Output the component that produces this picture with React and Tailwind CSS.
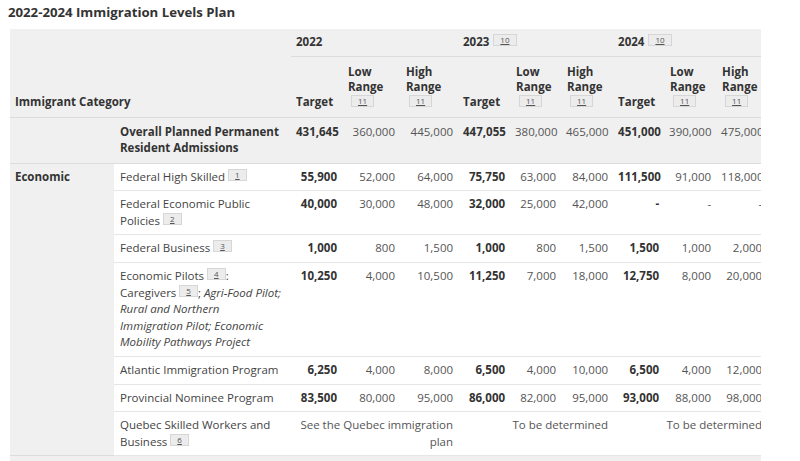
import React from "react";

const Fn = ({ n, className = "" }) => (
  <span
    className={
      "inline-block px-[6px] h-[12px] leading-[10px] text-[8px] font-normal not-italic border border-[#d6d6d6] bg-[#ececec] text-[#555] underline align-[3px] " +
      className
    }
  >
    {n}
  </span>
);

const rows = [
  {
    label: (
      <>
        Federal High Skilled <Fn n="1" />
      </>
    ),
    vals: ["55,900", "52,000", "64,000", "75,750", "63,000", "84,000", "111,500", "91,000", "118,000"],
  },
  {
    label: (
      <>
        Federal Economic Public
        <br />
        Policies <Fn n="2" />
      </>
    ),
    vals: ["40,000", "30,000", "48,000", "32,000", "25,000", "42,000", "-", "-", "-"],
  },
  {
    label: (
      <>
        Federal Business <Fn n="3" />
      </>
    ),
    vals: ["1,000", "800", "1,500", "1,000", "800", "1,500", "1,500", "1,000", "2,000"],
  },
  {
    label: (
      <>
        Economic Pilots <Fn n="4" />:
        <br />
        Caregivers <Fn n="5" />; <i>Agri-Food Pilot;</i>
        <br />
        <i>Rural and Northern</i>
        <br />
        <i>Immigration Pilot; Economic</i>
        <br />
        <i>Mobility Pathways Project</i>
      </>
    ),
    vals: ["10,250", "4,000", "10,500", "11,250", "7,000", "18,000", "12,750", "8,000", "20,000"],
  },
  {
    label: <>Atlantic Immigration Program</>,
    vals: ["6,250", "4,000", "8,000", "6,500", "4,000", "10,000", "6,500", "4,000", "12,000"],
  },
  {
    label: <>Provincial Nominee Program</>,
    vals: ["83,500", "80,000", "95,000", "86,000", "82,000", "95,000", "93,000", "88,000", "98,000"],
  },
];

const widths = [104, 177, 51, 58, 58, 52, 51, 52, 51, 52, 51];

export default function App() {
  return (
    <div
      className="w-[800px] h-[461px] overflow-hidden bg-white text-[#333] text-[11.5px] leading-[16.6px]"
      style={{ fontFamily: '"Open Sans", "Noto Sans", sans-serif' }}
    >
      <h1 className="pl-[8px] pt-[3px] h-[29px] text-[13.2px] leading-[18px] font-bold text-[#333]">
        2022-2024 Immigration Levels Plan
      </h1>
      <div className="ml-[10px] w-[751px] overflow-hidden bg-[#f0f0f0]">
        <table className="table-fixed border-collapse w-[757px]">
          <colgroup>
            {widths.map((w, i) => (
              <col key={i} style={{ width: w }} />
            ))}
          </colgroup>
          <thead>
            <tr className="h-[27px]">
              <th
                colSpan={2}
                rowSpan={2}
                className="align-bottom text-left font-bold px-[5px] pb-[6px] border-b border-[#dcdcdc]"
              >
                Immigrant Category
              </th>
              <th colSpan={3} className="text-left font-bold px-[5px] align-middle border-b border-[#dcdcdc]">
                2022
              </th>
              <th colSpan={3} className="text-left font-bold px-[5px] align-middle border-b border-[#dcdcdc]">
                2023 <Fn n="10" className="ml-[1px]" />
              </th>
              <th colSpan={3} className="text-left font-bold px-[5px] align-middle border-b border-[#dcdcdc]">
                2024 <Fn n="10" className="ml-[1px]" />
              </th>
            </tr>
            <tr className="h-[61px]">
              {[0, 1, 2].map((y) => (
                <React.Fragment key={y}>
                  <th className="align-bottom text-left font-bold px-[5px] pb-[6px] border-b border-[#dcdcdc]">
                    Target
                  </th>
                  <th className="align-bottom text-left font-bold pl-[6px] pr-[4px] pb-[8px] leading-[15px] border-b border-[#dcdcdc]">
                    Low
                    <br />
                    Range
                    <br />
                    <Fn n="11" className="ml-[3px] align-top mt-[1px]" />
                  </th>
                  <th className="align-bottom text-left font-bold pl-[6px] pr-[4px] pb-[8px] leading-[15px] border-b border-[#dcdcdc]">
                    High
                    <br />
                    Range
                    <br />
                    <Fn n="11" className="ml-[3px] align-top mt-[1px]" />
                  </th>
                </React.Fragment>
              ))}
            </tr>
          </thead>
          <tbody>
            <tr>
              <td className="border-b border-[#dcdcdc]"></td>
              <td className="font-bold px-[6px] pt-[6px] pb-[6px] align-top border-b border-[#dcdcdc]">
                Overall Planned Permanent
                <br />
                Resident Admissions
              </td>
              {["431,645", "360,000", "445,000", "447,055", "380,000", "465,000", "451,000", "390,000", "475,000"].map(
                (v, i) => (
                  <td
                    key={i}
                    className={
                      "text-right px-[5px] pt-[6px] align-top whitespace-nowrap border-b border-[#dcdcdc] " +
                      (i % 3 === 0 ? "font-bold text-[#333]" : "text-[#555]")
                    }
                  >
                    {v}
                  </td>
                )
              )}
            </tr>
            {rows.map((r, ri) => (
              <tr key={ri}>
                {ri === 0 && (
                  <td rowSpan={7} className="align-top font-bold px-[5px] py-[5px] border-b border-[#dcdcdc]">
                    Economic
                  </td>
                )}
                <td className="bg-white align-top px-[6px] py-[5px] text-[#444] border-b border-[#e6e6e6]">
                  {r.label}
                </td>
                {r.vals.map((v, i) => (
                  <td
                    key={i}
                    className={
                      "bg-white text-right align-top px-[5px] py-[5px] whitespace-nowrap border-b border-[#e6e6e6] " +
                      (i % 3 === 0 ? "font-bold text-[#333]" : "text-[#555]")
                    }
                  >
                    {v}
                  </td>
                ))}
              </tr>
            ))}
            <tr>
              <td className="bg-white align-top px-[6px] py-[5px] text-[#444] border-b border-[#e6e6e6]">
                Quebec Skilled Workers and
                <br />
                Business <Fn n="6" />
              </td>
              <td colSpan={3} className="bg-white align-top text-right px-[5px] py-[5px] text-[#555] border-b border-[#e6e6e6]">
                See the Quebec immigration
                <br />
                plan
              </td>
              <td colSpan={3} className="bg-white align-top text-right px-[5px] py-[5px] text-[#555] border-b border-[#e6e6e6]">
                To be determined
              </td>
              <td colSpan={3} className="bg-white align-top text-right px-[5px] py-[5px] text-[#555] border-b border-[#e6e6e6]">
                To be determined
              </td>
            </tr>
            <tr className="h-[30px]">
              <td colSpan={11}></td>
            </tr>
          </tbody>
        </table>
      </div>
    </div>
  );
}
